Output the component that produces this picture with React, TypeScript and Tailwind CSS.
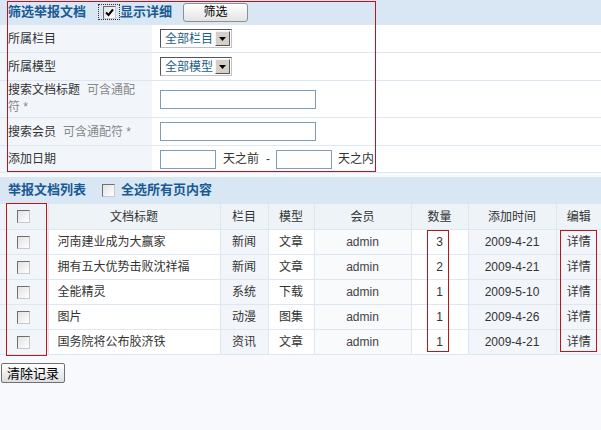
import React from 'react';

const rows = [
  ['河南建业成为大赢家', '新闻', '文章', 'admin', '3', '2009-4-21'],
  ['拥有五大优势击败沈祥福', '新闻', '文章', 'admin', '2', '2009-4-21'],
  ['全能精灵', '系统', '下载', 'admin', '1', '2009-5-10'],
  ['图片', '动漫', '图集', 'admin', '1', '2009-4-26'],
  ['国务院将公布胶济铁', '资讯', '文章', 'admin', '1', '2009-4-21'],
];

function CheckBox({ checked = false }: { checked?: boolean }) {
  return (
    <span className="inline-flex h-[13px] w-[13px] shrink-0 items-center justify-center border border-t-[#6e6e6e] border-l-[#6e6e6e] border-b-[#c8c8c8] border-r-[#c8c8c8] bg-gradient-to-br from-[#e2e2e2] to-white">
      {checked && (
        <svg width="9" height="9" viewBox="0 0 9 9">
          <path d="M1 4.5 L3.5 7 L8 1.5" stroke="#000" strokeWidth="2" fill="none" />
        </svg>
      )}
    </span>
  );
}

function FakeSelect({ label }: { label: string }) {
  return (
    <div className="flex h-[19px] w-[72px] items-center border border-t-[#555] border-l-[#555] border-b-[#c0c0c0] border-r-[#c0c0c0] bg-white">
      <span className="flex-1 pl-[4px] text-[12px] leading-none text-[#1d5e86]">{label}</span>
      <span className="mr-[1px] flex h-[15px] w-[15px] items-center justify-center border border-t-[#f4f4f4] border-l-[#f4f4f4] border-b-[#555] border-r-[#555] bg-[#d4d0c8]">
        <svg width="7" height="4" viewBox="0 0 7 4">
          <path d="M0 0 H7 L3.5 4 Z" fill="#000" />
        </svg>
      </span>
    </div>
  );
}

function TextBox({ w }: { w: string }) {
  return <div className={`h-[19px] border border-[#7f9db9] bg-white ${w}`} />;
}

// red annotation frames drawn over the screenshot
function Mark({ className }: { className: string }) {
  return <div className={`pointer-events-none absolute z-10 border border-solid border-[#c0141c] ${className}`} />;
}

export default function App() {
  return (
    <div className="relative h-[430px] w-[601px] overflow-hidden bg-[#f8f9fd] font-['Liberation_Sans','Noto_Sans_CJK_SC',sans-serif] text-[12px] text-[#333]">
      {/* 筛选 */}
      <div className="relative bg-white">
        <div className="flex h-[24px] items-center bg-[#d9e7f5] pl-[8px]">
          <span className="text-[13px] font-bold text-[#1a5a93]">筛选举报文档</span>
          <span className="ml-[12px] flex h-[16px] w-[22px] items-center justify-center border border-dotted border-[#333]">
            <CheckBox checked />
          </span>
          <span className="text-[13px] font-bold text-[#1a5a93]">显示详细</span>
          <button className="ml-[11px] h-[19px] w-[65px] rounded-[3px] border border-[#8f8f8f] bg-gradient-to-b from-white to-[#e3e3e3] text-[12px] leading-none text-black">
            筛选
          </button>
        </div>
        <div className="flex h-[28px] border-t border-[#dce7f2]">
          <div className="flex w-[152px] items-center bg-[#f2f6fb] pl-[8px]">所属栏目</div>
          <div className="flex flex-1 items-center pl-[8px]">
            <FakeSelect label="全部栏目" />
          </div>
        </div>
        <div className="flex h-[28px] border-t border-[#dce7f2]">
          <div className="flex w-[152px] items-center bg-[#f2f6fb] pl-[8px]">所属模型</div>
          <div className="flex flex-1 items-center pl-[8px]">
            <FakeSelect label="全部模型" />
          </div>
        </div>
        <div className="flex h-[37px] border-t border-[#dce7f2]">
          <div className="flex w-[152px] flex-col justify-center bg-[#f2f6fb] pl-[8px] leading-[17px]">
            <div>
              搜索文档标题<span className="ml-[7px] text-[#888]">可含通配</span>
            </div>
            <div className="text-[#888]">符 *</div>
          </div>
          <div className="flex flex-1 items-center pl-[8px]">
            <TextBox w="w-[156px]" />
          </div>
        </div>
        <div className="flex h-[28px] border-t border-[#dce7f2]">
          <div className="flex w-[152px] items-center bg-[#f2f6fb] pl-[8px]">
            搜索会员<span className="ml-[7px] text-[#888]">可含通配符 *</span>
          </div>
          <div className="flex flex-1 items-center pl-[8px]">
            <TextBox w="w-[156px]" />
          </div>
        </div>
        <div className="flex h-[28px] border-y border-[#dce7f2]">
          <div className="flex w-[152px] items-center bg-[#f2f6fb] pl-[8px]">添加日期</div>
          <div className="flex flex-1 items-center pl-[8px]">
            <TextBox w="w-[56px]" />
            <span className="ml-[7px]">天之前</span>
            <span className="ml-[7px]">-</span>
            <span className="ml-[6px]">
              <TextBox w="w-[56px]" />
            </span>
            <span className="ml-[6px]">天之内</span>
          </div>
        </div>
        <Mark className="left-[7px] top-[1px] h-[171px] w-[369px]" />
      </div>

      {/* 列表 */}
      <div className="mt-[4px] flex h-[26px] items-center bg-[#d9e7f5] pl-[8px]">
        <span className="text-[13px] font-bold text-[#1a5a93]">举报文档列表</span>
        <span className="ml-[16px] flex">
          <CheckBox />
        </span>
        <span className="ml-[6px] text-[13px] font-bold text-[#1a5a93]">全选所有页内容</span>
      </div>
      <table className="w-[601px] table-fixed border-collapse">
        <colgroup>
          <col className="w-[48px]" />
          <col className="w-[172px]" />
          <col className="w-[48px]" />
          <col className="w-[46px]" />
          <col className="w-[97px]" />
          <col className="w-[57px]" />
          <col className="w-[88px]" />
          <col className="w-[45px]" />
        </colgroup>
        <thead>
          <tr className="h-[26px] bg-[#eef3f8] text-center">
            <td className="border border-[#dce7f2] border-l-0">
              <span className="flex justify-center">
                <CheckBox />
              </span>
            </td>
            <td className="border border-[#dce7f2]">文档标题</td>
            <td className="border border-[#dce7f2]">栏目</td>
            <td className="border border-[#dce7f2]">模型</td>
            <td className="border border-[#dce7f2]">会员</td>
            <td className="border border-[#dce7f2]">数量</td>
            <td className="border border-[#dce7f2]">添加时间</td>
            <td className="border border-[#dce7f2] border-r-0">编辑</td>
          </tr>
        </thead>
        <tbody>
          {rows.map((r, i) => (
            <tr key={i} className="h-[25px] text-center">
              <td className="border border-[#dce7f2] border-l-0 bg-[#f2f6fa]">
                <span className="flex justify-center">
                  <CheckBox />
                </span>
              </td>
              <td className="border border-[#dce7f2] bg-white pl-[9px] text-left">{r[0]}</td>
              <td className="border border-[#dce7f2] bg-[#f2f6fa]">{r[1]}</td>
              <td className="border border-[#dce7f2] bg-white">{r[2]}</td>
              <td className="border border-[#dce7f2] bg-[#f8fafc] text-[#444]">{r[3]}</td>
              <td className="border border-[#dce7f2] bg-white">{r[4]}</td>
              <td className="border border-[#dce7f2] bg-[#f2f6fa]">{r[5]}</td>
              <td className="border border-[#dce7f2] border-r-0 bg-[#f2f6fa]">详情</td>
            </tr>
          ))}
        </tbody>
      </table>
      <button className="mt-[8px] ml-[1px] h-[20px] w-[64px] rounded-[2px] border border-[#707070] bg-gradient-to-b from-white to-[#dedede] text-[13px] leading-none text-black">
        清除记录
      </button>

      <Mark className="left-[6px] top-[203px] h-[153px] w-[41px]" />
      <Mark className="left-[427px] top-[230px] h-[122px] w-[22px]" />
      <Mark className="left-[560px] top-[230px] h-[122px] w-[37px]" />
    </div>
  );
}
